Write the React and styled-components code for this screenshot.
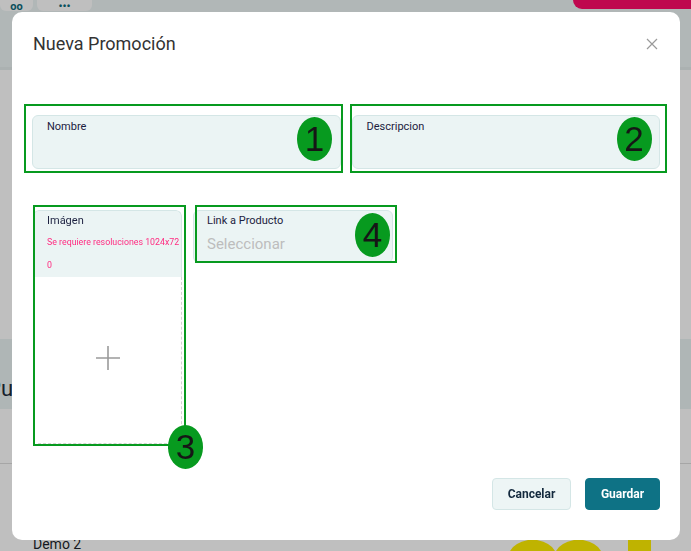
import React from 'react';
import styled, { createGlobalStyle } from 'styled-components';

const Global = createGlobalStyle`
    * { box-sizing: border-box; }
    html, body { margin: 0; padding: 0; }
    body {
        font-family: Roboto, "Liberation Sans", sans-serif;
        background: #fff;
    }
`;

// page behind the dialog
const Page = styled.div`
    width: 100vw;
    height: 100vh;
    overflow: hidden;
    display: flex;
    flex-direction: column;
    background: #fff;
`;

const TopBar = styled.div`
    height: 70px;
    flex-shrink: 0;
    background: #edf5f5;
    border-bottom: 3px solid #e4eded;
    display: flex;
    align-items: flex-start;
`;

const Tab = styled.div`
    width: ${(p) => p.w}px;
    margin-left: ${(p) => p.ml || 0}px;
    height: 11px;
    background: #fff;
    border-radius: 0 0 6px 6px;
    display: flex;
    justify-content: center;
    align-items: flex-end;
    overflow: hidden;
    color: #0d6b7c;
    font-size: 11px;
    font-weight: 700;
    line-height: 9px;
`;

const PinkButton = styled.div`
    margin-left: auto;
    width: 118px;
    height: 9px;
    background: #ff0a69;
    border-radius: 0 0 0 9px;
`;

const Band = styled.div`
    margin-top: 269px;
    height: 70px;
    background: #eaf3f3;
    display: flex;
    align-items: flex-end;
    padding-bottom: 8px;
    font-size: 22px;
    color: #1b2b3b;
`;

const BandTitle = styled.span`
    margin-left: -13px;
`;

const Rule = styled.div`
    margin-top: 54px;
    height: 1px;
    background: #dedede;
`;

const BottomRow = styled.div`
    margin-top: auto;
    height: 16px;
    display: flex;
    align-items: flex-end;
    padding-left: 33px;
    font-size: 14px;
    color: #1b1f2b;
    line-height: 14px;
`;

const Bottles = styled.svg`
    margin-left: auto;
`;

const YellowTag = styled.div`
    width: 23px;
    height: 14px;
    background: #ffef00;
    margin: 0 40px 0 23px;
`;

// dialog
const Overlay = styled.div`
    position: fixed;
    inset: 0;
    background: rgba(0, 0, 0, 0.25);
`;

const Modal = styled.div`
    position: absolute;
    top: 12px;
    left: 12px;
    width: 668px;
    height: 528px;
    background: #fff;
    border-radius: 10px;
    display: flex;
    flex-direction: column;
`;

const Header = styled.div`
    height: 54px;
    padding: 22px 22px 0 21px;
    display: flex;
    justify-content: space-between;
    align-items: flex-start;
`;

const Title = styled.h2`
    margin: 0;
    font-size: 18px;
    line-height: 20px;
    font-weight: 400;
    color: #333;
`;

const Close = styled.button`
    border: none;
    background: none;
    padding: 0;
    margin-top: 4px;
    width: 12px;
    height: 12px;
    display: flex;
    cursor: pointer;
`;

const Body = styled.div`
    flex: 1;
    padding: 49px 20px 0 20px;
`;

const RowOne = styled.div`
    display: grid;
    grid-template-columns: 1fr 1fr;
    gap: 11px;
`;

const RowTwo = styled.div`
    display: flex;
    align-items: flex-start;
    gap: 11px;
    margin-top: 41px;
    padding-left: 1px;
`;

const Marked = styled.div`
    position: relative;
`;

const Frame = styled.div`
    position: absolute;
    top: ${(p) => p.t}px;
    left: ${(p) => p.l}px;
    right: ${(p) => p.r}px;
    bottom: ${(p) => p.b}px;
    border: 2px solid #079a1f;
    pointer-events: none;
`;

const Badge = styled.div`
    position: absolute;
    top: ${(p) => p.t}px;
    left: ${(p) => p.l}px;
    width: 35px;
    height: 44px;
    border-radius: 50%;
    background: #079a1f;
    display: flex;
    align-items: center;
    justify-content: center;
    font-family: "Liberation Sans", Arial, sans-serif;
    font-size: 35px;
    color: #161616;
`;

const Field = styled.div`
    height: 54px;
    background: #ebf4f4;
    border: 1px solid #d4e6e6;
    border-radius: 6px;
    padding: 4px 14px;
`;

const Label = styled.div`
    font-size: 11px;
    line-height: 14px;
    color: #1c2140;
`;

const ImageCard = styled.div`
    width: 149px;
    height: 234px;
    display: flex;
    flex-direction: column;
    border-radius: 6px;
    overflow: hidden;
`;

const ImageHead = styled.div`
    height: 67px;
    background: #ebf4f4;
    border: 1px solid #d4e6e6;
    border-bottom: none;
    border-radius: 6px 6px 0 0;
    padding: 3px 0 0 13px;
`;

const Hint = styled.div`
    margin-top: 3px;
    font-size: 8.8px;
    line-height: 23px;
    color: #ff2b80;
    word-break: break-all;
`;

const Drop = styled.div`
    flex: 1;
    border: 1px dashed #d3d3d3;
    border-top: none;
    display: flex;
    align-items: center;
    justify-content: center;
    padding-bottom: 4px;
`;

const LinkCard = styled.div`
    width: 200px;
    height: 53px;
    background: #ebf4f4;
    border: 1px solid #d4e6e6;
    border-radius: 6px;
    padding: 3px 13px;
`;

const Placeholder = styled.div`
    margin-top: 6px;
    font-size: 15px;
    line-height: 20px;
    color: #bdbdbd;
`;

const Footer = styled.div`
    display: flex;
    justify-content: flex-end;
    gap: 14px;
    padding: 0 20px 30px;
`;

const Button = styled.button`
    width: ${(p) => (p.primary ? 75 : 79)}px;
    height: 32px;
    border-radius: 4px;
    border: 1px solid ${(p) => (p.primary ? '#0e7285' : '#d4e6e6')};
    background: ${(p) => (p.primary ? '#0e7285' : '#edf5f5')};
    color: ${(p) => (p.primary ? '#fff' : '#13293d')};
    font-family: Roboto, sans-serif;
    font-size: 12px;
    font-weight: 700;
    cursor: pointer;
`;

export default function App() {
    return (
        <>
            <Global />
            <Page>
                <TopBar>
                    <Tab w={33}>oo</Tab>
                    <Tab w={55} ml={4}>•••</Tab>
                    <PinkButton />
                </TopBar>
                <Band>
                    <BandTitle>Publicaciones</BandTitle>
                </Band>
                <Rule />
                <BottomRow>
                    Demo 2
                    <Bottles width="95" height="16" viewBox="0 0 95 16">
                        <rect x="19" y="1" width="7" height="5" rx="1" fill="#1565c0" />
                        <path d="M0 16 Q4 8 18 5 L27 5 Q41 8 45 16 Z" fill="#ffef00" />
                        <rect x="65" y="1" width="7" height="5" rx="1" fill="#1565c0" />
                        <path d="M46 16 Q50 8 64 5 L73 5 Q87 8 91 16 Z" fill="#ffef00" />
                    </Bottles>
                    <YellowTag />
                </BottomRow>
            </Page>

            <Overlay>
                <Modal>
                    <Header>
                        <Title>Nueva Promoción</Title>
                        <Close aria-label="Cerrar">
                            <svg width="12" height="12" viewBox="0 0 12 12">
                                <path d="M1 1 L11 11 M11 1 L1 11" stroke="#9a9a9a" strokeWidth="1.2" />
                            </svg>
                        </Close>
                    </Header>

                    <Body>
                        <RowOne>
                            <Marked>
                                <Field>
                                    <Label>Nombre</Label>
                                </Field>
                                <Frame t={-11} l={-8} r={-2} b={-4} />
                                <Badge t={2} l={265}>1</Badge>
                            </Marked>
                            <Marked>
                                <Field>
                                    <Label>Descripcion</Label>
                                </Field>
                                <Frame t={-11} l={-2} r={-7} b={-4} />
                                <Badge t={2} l={265}>2</Badge>
                            </Marked>
                        </RowOne>

                        <RowTwo>
                            <Marked>
                                <ImageCard>
                                    <ImageHead>
                                        <Label>Imágen</Label>
                                        <Hint>Se requiere resoluciones 1024x720</Hint>
                                    </ImageHead>
                                    <Drop>
                                        <svg width="26" height="26" viewBox="0 0 26 26">
                                            <path d="M13 1 V25 M1 13 H25" stroke="#9a9a9a" strokeWidth="1.6" />
                                        </svg>
                                    </Drop>
                                </ImageCard>
                                <Frame t={-5} l={0} r={-4} b={-2} />
                                <Badge t={215} l={135}>3</Badge>
                            </Marked>
                            <Marked>
                                <LinkCard>
                                    <Label>Link a Producto</Label>
                                    <Placeholder>Seleccionar</Placeholder>
                                </LinkCard>
                                <Frame t={-5} l={2} r={-4} b={0} />
                                <Badge t={3} l={162}>4</Badge>
                            </Marked>
                        </RowTwo>
                    </Body>

                    <Footer>
                        <Button>Cancelar</Button>
                        <Button primary>Guardar</Button>
                    </Footer>
                </Modal>
            </Overlay>
        </>
    );
}
